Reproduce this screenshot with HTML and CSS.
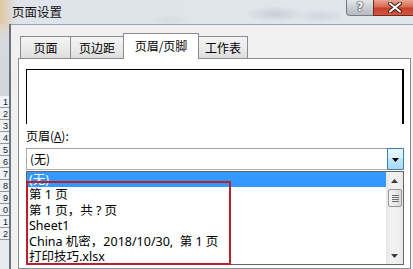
FILE: index.html
```html
<!DOCTYPE html>
<html lang="zh-CN">
<head>
<meta charset="utf-8">
<title>页面设置</title>
<link rel="stylesheet" href="styles.css">
</head>
<body>
<div class="screen">
  <div class="titlebar">
    <div class="title">页面设置</div>
    <div class="caption-btns">
      <div class="btn-help">?</div>
      <div class="btn-close">
        <svg width="14" height="11" viewBox="0 0 14 11"><path d="M2 1.5 L12 9.5 M12 1.5 L2 9.5" stroke="#3a1a14" stroke-width="4" stroke-linecap="round"/><path d="M2 1.5 L12 9.5 M12 1.5 L2 9.5" stroke="#ffffff" stroke-width="2.2" stroke-linecap="round"/></svg>
      </div>
    </div>
  </div>
  <div class="main">
    <div class="sheet">
      <div class="sheet-top"></div>
      <div class="rh">1</div>
      <div class="rh">2</div>
      <div class="rh">3</div>
      <div class="rh">4</div>
      <div class="rh">5</div>
      <div class="rh">6</div>
      <div class="rh">7</div>
      <div class="rh">8</div>
      <div class="rh">9</div>
      <div class="rh">0</div>
      <div class="rh">1</div>
      <div class="rh">2</div>
    </div>
    <div class="client">
      <div class="tabs">
        <div class="tab t1">页面</div>
        <div class="tab t2">页边距</div>
        <div class="tab active">页眉/页脚</div>
        <div class="tab t4">工作表</div>
      </div>
      <div class="panel">
        <div class="preview"></div>
        <div class="label">页眉(<u>A</u>):</div>
        <div class="combo">
          <span class="combo-text">(无)</span>
          <span class="combo-btn">
            <svg width="7" height="4" viewBox="0 0 7 4"><path d="M0 0 H7 L3.5 4 Z" fill="#000"/></svg>
          </span>
        </div>
        <div class="list">
          <div class="items">
            <div class="item selected">(无)</div>
            <div class="item">第 1 页</div>
            <div class="item">第 1 页，共 ? 页</div>
            <div class="item">Sheet1</div>
            <div class="item">China 机密，2018/10/30,  第 1 页</div>
            <div class="item">打印技巧.xlsx</div>
          </div>
          <div class="scrollbar">
            <div class="sb-btn">
              <svg width="7" height="4" viewBox="0 0 7 4"><path d="M0 4 H7 L3.5 0 Z" fill="#3c3c3c"/></svg>
            </div>
            <div class="sb-thumb">
              <span class="grip"></span><span class="grip"></span><span class="grip"></span><span class="grip"></span>
            </div>
            <div class="sb-track"></div>
            <div class="sb-btn">
              <svg width="7" height="4" viewBox="0 0 7 4"><path d="M0 0 H7 L3.5 4 Z" fill="#3c3c3c"/></svg>
            </div>
          </div>
          <div class="highlight-box"></div>
        </div>
      </div>
    </div>
  </div>
</div>
</body>
</html>
```

FILE: styles.css
```css
* { box-sizing: border-box; }

html, body {
  margin: 0;
  padding: 0;
}

body {
  width: 413px;
  height: 269px;
  overflow: hidden;
  font-family: "Noto Sans", "Noto Sans CJK SC", sans-serif;
  font-size: 12px;
  color: #000;
  background: #dfe5ec;
}

.screen {
  display: flex;
  flex-direction: column;
  width: 413px;
  height: 269px;
}

/* ---------- title bar (glass) ---------- */
.titlebar {
  height: 24px;
  flex: none;
  display: flex;
  align-items: flex-start;
  background:
    radial-gradient(ellipse 30px 8px at 275px 14px, rgba(170,178,188,0.45), transparent),
    radial-gradient(ellipse 24px 7px at 320px 16px, rgba(180,188,198,0.4), transparent),
    radial-gradient(ellipse 20px 6px at 170px 20px, rgba(196,202,210,0.35), transparent),
    linear-gradient(90deg, #e2c7a2 0, #dcd7cf 10px, #dfe4ea 16px, #e1e6ec 100%);
}

.title {
  font-family: "Noto Sans CJK SC", sans-serif;
  font-size: 12.5px;
  line-height: 16px;
  margin: 4px 0 0 12px;
  color: #111;
}

.caption-btns {
  margin-left: auto;
  display: flex;
  margin-right: -3px;
}

.btn-help {
  width: 27px;
  height: 16px;
  border: 1px solid #727b86;
  border-top: none;
  border-right: none;
  border-bottom-left-radius: 4px;
  background: linear-gradient(#e4e7ea, #c8ccd1 55%, #b7bcc2);
  color: #fff;
  font-family: "DejaVu Sans", sans-serif;
  font-weight: bold;
  font-size: 12px;
  line-height: 14px;
  text-align: center;
  text-shadow: 0 0 1px #2b3540, 0 0 1px #2b3540, 0 0 2px #2b3540;
}

.btn-close {
  width: 43px;
  height: 16px;
  border: 1px solid #6b2b20;
  border-top: none;
  border-bottom-right-radius: 4px;
  background: linear-gradient(#e8a796, #d86a52 45%, #c7412b 55%, #d4573f);
  display: flex;
  align-items: center;
  justify-content: center;
  padding-bottom: 1px;
}

/* ---------- main area ---------- */
.main {
  flex: 1;
  display: flex;
  min-height: 0;
}

.sheet {
  width: 11px;
  flex: none;
  display: flex;
  flex-direction: column;
  overflow: hidden;
  background: #e6ebf1;
  border-right: 2px solid #6e737a;
}

.sheet-top {
  height: 72px;
  flex: none;
  background: linear-gradient(#e2d4bf, #d6d9dd 14px, #d2d5d9);
}

.rh {
  height: 12px;
  flex: none;
  padding-top: 1px;
  font-family: "Liberation Sans", sans-serif;
  font-size: 9px;
  line-height: 10px;
  color: #1b1b1b;
  text-indent: 3px;
  border-bottom: 1px solid #8e98a4;
  background: #eef1f5;
}

.client {
  flex: 1;
  min-width: 0;
  background: #f0f0f0;
  border-top: 1px solid #9aa3ae;
  padding: 8px 0 0 7px;
  display: flex;
  flex-direction: column;
}

/* ---------- tabs ---------- */
.tabs {
  display: flex;
  align-items: flex-end;
  height: 25px;
  margin-left: 2px;
  position: relative;
  z-index: 1;
  flex: none;
}

.tab {
  height: 22px;
  border: 1px solid #898c95;
  border-bottom: none;
  background: linear-gradient(#f3f3f3, #ebebeb 50%, #dddddd);
  font-family: "Noto Sans CJK SC", sans-serif;
  font-size: 12px;
  line-height: 21px;
  text-align: center;
  color: #000;
}

.t1 { width: 51px; }
.t2 { width: 54px; margin-left: -1px; }
.t4 { width: 50px; margin-left: -1px; }

.tab.active {
  width: 76px;
  height: 26px;
  margin-left: -1px;
  margin-bottom: -1px;
  background: #fff;
  line-height: 23px;
}

/* ---------- panel ---------- */
.panel {
  width: 393px;
  flex: 1;
  background: #fff;
  border: 1px solid #898c95;
  padding: 10px 0 0 7px;
}

.preview {
  width: 378px;
  height: 55px;
  border-top: 1px solid #000;
  border-left: 1px solid #000;
  border-right: 2px solid #000;
}

.label {
  margin-top: 3px;
  font-family: "Noto Sans CJK SC", sans-serif;
  line-height: 18px;
  height: 18px;
}

.label u {
  text-underline-offset: 1px;
}

.combo {
  margin-top: 3px;
  width: 378px;
  height: 22px;
  border: 1px solid #abadb3;
  border-top-color: #9ea3ab;
  display: flex;
  align-items: stretch;
  background: #fff;
}

.combo-text {
  flex: 1;
  padding-left: 3px;
  line-height: 20px;
  font-family: "Noto Sans CJK SC", sans-serif;
}

.combo-btn {
  width: 17px;
  margin: -1px -1px -1px 0;
  border: 1px solid #3c7fb1;
  border-radius: 1px;
  background: linear-gradient(#eaf6fd, #d9f0fc 45%, #bee6fd 50%, #a7d9f5);
  display: flex;
  align-items: center;
  justify-content: center;
  padding-top: 1px;
}

/* ---------- dropdown list ---------- */
.list {
  position: relative;
  margin-top: 1px;
  width: 378px;
  height: 94px;
  border: 1px solid #646464;
  background: #fff;
  display: flex;
}

.items {
  flex: 1;
  min-width: 0;
}

.item {
  height: 15.4px;
  line-height: 15.4px;
  padding-left: 2px;
  white-space: pre;
  font-size: 12.5px;
}

.item.selected {
  background: #3399ff;
  color: #fff;
}

.scrollbar {
  width: 17px;
  flex: none;
  display: flex;
  flex-direction: column;
  background: linear-gradient(90deg, #e6e6e6, #f2f2f2 30%, #f0f0f0 70%, #e8e8e8);
}

.sb-btn {
  height: 17px;
  flex: none;
  display: flex;
  align-items: center;
  justify-content: center;
}

.sb-thumb {
  height: 18px;
  margin: 0 1px 0 2px;
  flex: none;
  border: 1px solid #979797;
  border-radius: 2px;
  background: linear-gradient(90deg, #f4f4f4, #e9e9e9 50%, #d9d9d9);
  display: flex;
  flex-direction: column;
  align-items: center;
  justify-content: center;
  gap: 1px;
}

.grip {
  display: block;
  width: 7px;
  height: 1px;
  background: #6f6f6f;
}

.sb-track {
  flex: 1;
}

.highlight-box {
  position: absolute;
  left: -1px;
  top: 9px;
  width: 205px;
  height: 84px;
  border: 2px solid #b8202e;
}
```
